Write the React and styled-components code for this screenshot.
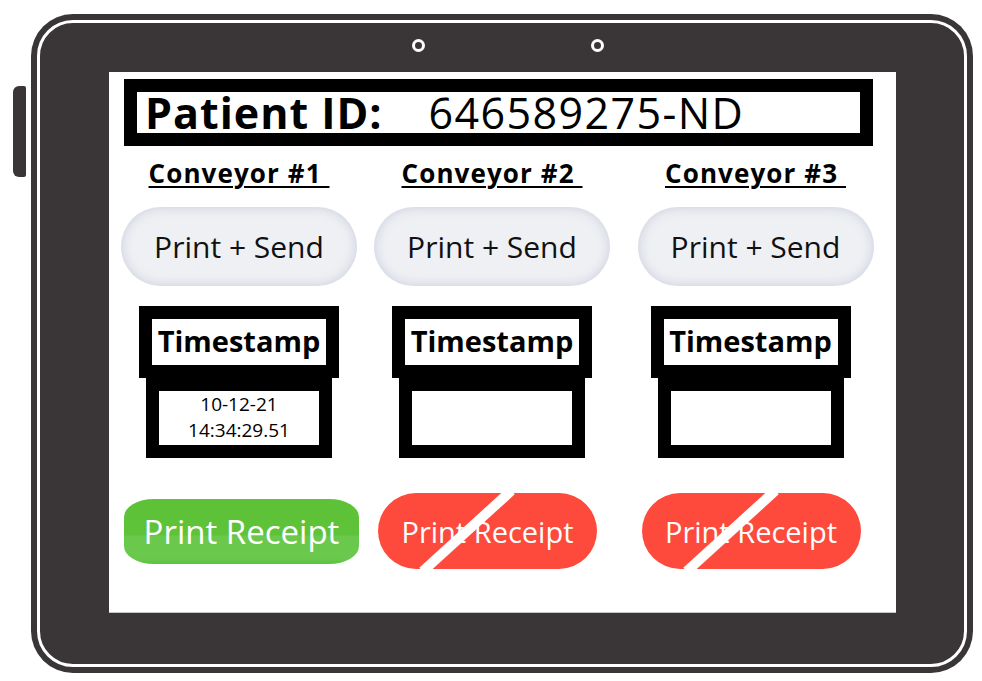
import React from 'react';
import styled, { createGlobalStyle } from 'styled-components';

const conveyors = [
  { id: 1, stamp: ['10-12-21', '14:34:29.51'], ready: true },
  { id: 2, stamp: null, ready: false },
  { id: 3, stamp: null, ready: false, shift: 10 },
];

const Global = createGlobalStyle`
  html, body {
    margin: 0;
    background: #ffffff;
    font-family: "Open Sans", "DejaVu Sans", sans-serif;
  }
`;

const Page = styled.div`
  display: flex;
  align-items: flex-start;
  gap: 5px;
  padding: 14px 0 0 13px;
`;

const SideKey = styled.div`
  width: 13px;
  height: 91px;
  margin-top: 72px;
  background: #3a3637;
  border-radius: 6px 2px 2px 6px;
`;

const Tablet = styled.div`
  width: 942px;
  height: 659px;
  box-sizing: border-box;
  padding: 6px;
  background: #3a3637;
  border-radius: 42px;
`;

const Frame = styled.div`
  height: 100%;
  box-sizing: border-box;
  border: 3px solid #ffffff;
  border-radius: 36px;
  padding: 16px 68px 0 69px;
  display: flex;
  flex-direction: column;
`;

const CameraRow = styled.div`
  display: flex;
  justify-content: center;
  gap: 166px;
  padding-left: 10px;
`;

const Camera = styled.div`
  width: 13px;
  height: 13px;
  box-sizing: border-box;
  border: 3px solid #ffffff;
  border-radius: 50%;
`;

const Screen = styled.div`
  margin-top: 20px;
  width: 787px;
  height: 541px;
  box-sizing: border-box;
  padding-top: 7px;
  background: #ffffff;
  border-bottom: 1px solid #c4c4c4;
`;

const PatientBox = styled.div`
  margin: 0 23px 0 15px;
  height: 67px;
  box-sizing: border-box;
  border: 13px solid #000;
  display: flex;
  align-items: center;
  padding-left: 8px;
  line-height: 41px;
  font-size: 43px;
  color: #000;
`;

const PatientLabel = styled.span`
  font-weight: 700;
  letter-spacing: 1px;
`;

const PatientValue = styled.span`
  font-weight: 400;
  margin-left: 46px;
  letter-spacing: 1.4px;
`;

const Columns = styled.div`
  margin-top: 12px;
  display: grid;
  grid-template-columns: 260px 246px 281px;
`;

const Column = styled.div`
  display: flex;
  flex-direction: column;
  align-items: center;
`;

const Heading = styled.div`
  font-size: 26px;
  font-weight: 700;
  line-height: 30px;
  letter-spacing: 1.1px;
  white-space: pre;
  color: #000;
  text-decoration: underline;
  text-decoration-thickness: 2px;
  text-underline-offset: 3px;
`;

const SendButton = styled.button`
  margin-top: 19px;
  width: 236px;
  height: 79px;
  padding: 0;
  border: none;
  border-radius: 40px;
  background: #eef0f4;
  box-shadow: inset 0 0 12px rgba(150, 156, 182, 0.4);
  font-family: inherit;
  font-size: 30px;
  color: #111;
`;

const Stamp = styled.div`
  margin-top: 20px;
  margin-right: ${p => p.$shift || 0}px;
  display: flex;
  flex-direction: column;
  align-items: center;
`;

const StampLabel = styled.div`
  width: 200px;
  height: 72px;
  box-sizing: border-box;
  border: 13px solid #000;
  text-align: center;
  font-size: 29px;
  font-weight: 700;
  line-height: 44px;
  color: #000;
`;

const StampValue = styled.div`
  width: 186px;
  height: 80px;
  box-sizing: border-box;
  border: 13px solid #000;
  text-align: center;
  font-size: 19px;
  line-height: 26px;
  color: #000;
`;

const ReceiptRow = styled.div`
  margin-top: 35px;
  height: 76px;
  display: flex;
  align-items: center;
`;

const ReceiptButton = styled.button`
  position: relative;
  overflow: hidden;
  padding: 0;
  border: none;
  font-family: inherit;
  color: #ffffff;
`;

const ReadyReceipt = styled(ReceiptButton)`
  margin-left: 5px;
  width: 235px;
  height: 65px;
  border-radius: 30px / 18px;
  font-size: 33px;
  background: linear-gradient(180deg, #5dc238 0%, #5fc33a 55%, #6bc84c 58%, #6ac84d 92%, #5cc040 100%);
`;

const BlockedReceipt = styled(ReceiptButton)`
  margin-right: 9px;
  width: 219px;
  height: 76px;
  border-radius: 38px;
  font-size: 29px;
  background: #fd4a3c;

  &::after {
    content: '';
    position: absolute;
    left: 84px;
    top: -22px;
    width: 10px;
    height: 120px;
    background: #ffffff;
    transform: rotate(47.7deg);
  }
`;

const ReceiptText = styled.span`
  position: relative;
`;

export default function App() {
  return (
    <>
      <Global />
      <Page>
        <SideKey />
        <Tablet>
          <Frame>
            <CameraRow>
              <Camera />
              <Camera />
            </CameraRow>
            <Screen>
              <PatientBox>
                <PatientLabel>Patient ID:</PatientLabel>
                <PatientValue>646589275-ND</PatientValue>
              </PatientBox>
              <Columns>
                {conveyors.map(c => (
                  <Column key={c.id}>
                    <Heading>{`Conveyor #${c.id} `}</Heading>
                    <SendButton>Print + Send</SendButton>
                    <Stamp $shift={c.shift}>
                      <StampLabel>Timestamp</StampLabel>
                      <StampValue>
                        {c.stamp && c.stamp.map(line => <div key={line}>{line}</div>)}
                      </StampValue>
                    </Stamp>
                    <ReceiptRow>
                      {c.ready
                        ? <ReadyReceipt>Print Receipt</ReadyReceipt>
                        : <BlockedReceipt><ReceiptText>Print Receipt</ReceiptText></BlockedReceipt>}
                    </ReceiptRow>
                  </Column>
                ))}
              </Columns>
            </Screen>
          </Frame>
        </Tablet>
      </Page>
    </>
  );
}
